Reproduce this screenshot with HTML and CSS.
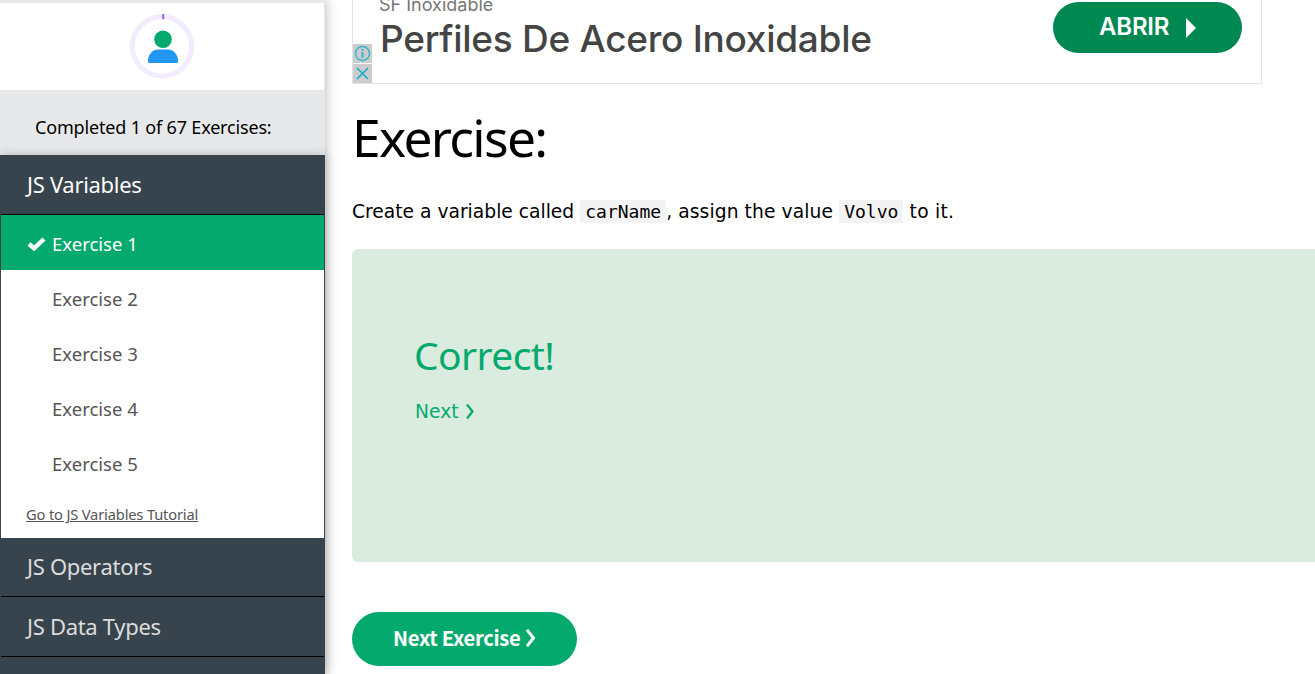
FILE: index.html
```html
<!DOCTYPE html>
<html lang="en">
<head>
<meta charset="utf-8">
<title>JS Exercises</title>
<link rel="stylesheet" href="styles.css">
</head>
<body>
<div class="page">
  <aside class="sidebar">
    <div class="profile">
      <svg class="avatar" viewBox="0 0 66 66" width="66" height="66">
        <circle cx="33" cy="32.500" r="29.700" fill="none" stroke="#f3ecff" stroke-width="5"/>
        <path d="M33.200 0h2v5.200h-2z" fill="#9763f6"/>
        <circle cx="34" cy="25.300" r="8.800" fill="#04aa6d"/>
        <path d="M19 47.500V47C19 40 24 35.500 29 35.500H39C44 35.500 49 40 49 47V47.500Q49 49 47.500 49H20.500Q19 49 19 47.500Z" fill="#2196f3"/>
      </svg>
    </div>
    <p class="progress">Completed 1 of 67 Exercises:</p>
    <nav class="menu">
      <a class="section open">JS Variables</a>
      <a class="item active"><svg class="check" viewBox="0 0 19 14" width="19" height="14"><path d="M2 7 7.100 11.300 17 2" fill="none" stroke="#fff" stroke-width="4.400"/></svg><span>Exercise 1</span></a>
      <a class="item">Exercise 2</a>
      <a class="item">Exercise 3</a>
      <a class="item">Exercise 4</a>
      <a class="item">Exercise 5</a>
      <a class="tutorial">Go to JS Variables Tutorial</a>
      <a class="section short">JS Operators</a>
      <a class="section">JS Data Types</a>
      <a class="section"></a>
    </nav>
  </aside>
  <main class="content">
    <section class="ad">
      <div class="ad-copy">
        <div class="ad-brand">SF Inoxidable</div>
        <div class="ad-title">Perfiles De Acero Inoxidable</div>
      </div>
      <a class="ad-button"><span>ABRIR</span><svg width="10" height="20" viewBox="0 0 10 20"><path d="M0 0 10 10 0 20z" fill="#fff"/></svg></a>
      <div class="ad-badges">
        <svg width="19" height="19" viewBox="0 0 19 19"><rect width="19" height="19" fill="#ccc"/><circle cx="9.500" cy="9.500" r="7" fill="none" stroke="#37b6cf" stroke-width="1.500"/><path d="M9.500 5v2M9.500 8v6" stroke="#37b6cf" stroke-width="2"/></svg>
        <svg width="19" height="19" viewBox="0 0 19 19"><rect width="19" height="19" fill="#ccc"/><path d="M4 4 15 15M15 4 4 15" stroke="#12aecb" stroke-width="1.600"/></svg>
      </div>
    </section>
    <h1 class="heading">Exercise:</h1>
    <p class="task">Create a variable called <code>carName</code><span class="loose">, assign the value </span><code>Volvo</code><span class="looser"> to it.</span></p>
    <section class="result">
      <h2 class="verdict">Correct!</h2>
      <a class="next"><span>Next</span><svg width="10" height="15" viewBox="0 0 10 15"><path d="M2 .500 7.500 7.500 2 14.500" fill="none" stroke="#04aa6d" stroke-width="2.300"/></svg></a>
    </section>
    <a class="next-exercise"><span>Next Exercise</span><svg width="12" height="18" viewBox="0 0 12 18"><path d="M2 .800 8.500 9 2 17.200" fill="none" stroke="#fff" stroke-width="3"/></svg></a>
  </main>
</div>
</body>
</html>
```
FILE: styles.css
```css
* { box-sizing: border-box; }
body { margin: 0; background: #fff; font-family: "Noto Sans", sans-serif; color: #000; }
.page { display: flex; height: 674px; overflow: hidden; }
.sidebar { width: 325px; flex: none; background: #e7e8ea; padding-top: 3px; box-shadow: 0 0 12px rgba(0,0,0,.3); }
.profile { height: 87px; margin-right: 1px; background: #fff; display: flex; justify-content: center; padding-top: 11px; }
.progress { margin: 0; height: 65px; padding: 25px 0 0 35px; font-size: 18px; letter-spacing: -.17px; line-height: 25px; white-space: nowrap; }
.menu { background: #38444d; box-shadow: 0 0 10px rgba(0,0,0,.2); padding: 0 1px; height: 600px; }
.section { display: block; height: 60px; padding-left: 26px; border-bottom: 1px solid #000; font-size: 22px; letter-spacing: -.3px; line-height: 59px; color: #ddd; }
.open { color: #fff; }
.short { height: 59px; line-height: 57px; }
.item { display: flex; align-items: center; height: 55px; padding: 2px 0 0 51px; background: #fff; color: #555; font-size: 18.500px; }
.active { background: #04aa6d; color: #fff; padding-left: 26px; gap: 6px; }
.tutorial { display: block; height: 48px; padding-left: 25px; background: #fff; color: #555; font-size: 14.700px; letter-spacing: -.17px; line-height: 49px; text-decoration: underline; }
.content { flex: none; width: 990px; padding-left: 27px; }
.ad { position: relative; width: 910px; height: 84px; border: 1px solid #e3e3e3; border-top: 0; display: flex; justify-content: space-between; padding: 2px 19px 0 26px; }
.ad-brand { font: 18px/20px Inter, sans-serif; color: #777; margin-top: -7px; }
.ad-title { font: 500 37px/48px Inter, sans-serif; letter-spacing: -.27px; color: #444; white-space: nowrap; padding-left: 1px; }
.ad-button { width: 189px; height: 51px; border-radius: 26px; background: #008853; color: #fff; font: 600 24px/48px Inter, sans-serif; letter-spacing: -.2px; display: flex; align-items: center; padding-left: 46px; gap: 17px; }
.ad-button span { padding-bottom: 1px; }
.ad-badges { position: absolute; left: 0; top: 44px; display: grid; gap: 1px; }
.ad-badges svg, .avatar { display: block; }
.heading { margin: 15px 0 0; font-size: 51.500px; letter-spacing: -1.700px; line-height: 76px; font-weight: 400; }
.task { margin: 24px 0 0; font: 18.700px/26px "DejaVu Sans", sans-serif; height: 26px; white-space: nowrap; }
.task code { font: 18.050px/23px "DejaVu Sans Mono", monospace; background: #f3f3f3; padding: 1px 5px; }
.loose { letter-spacing: .09px; }
.looser { letter-spacing: .25px; }
.result { margin-top: 24px; height: 313px; border-radius: 6px 0 0 6px; background: #d9ecdf; padding: 78px 63px; color: #04aa6d; }
.verdict { margin: 0 0 0 -1px; font-size: 39px; letter-spacing: -.600px; line-height: 56px; font-weight: 400; }
.next { display: flex; align-items: center; gap: 6px; margin-top: 16px; font: 18.700px/26px "DejaVu Sans", sans-serif; }
.next svg { margin-bottom: 1px; }
.next-exercise { display: flex; align-items: center; gap: 5px; margin-top: 50px; width: 225px; height: 54px; border-radius: 27px; background: #04aa6d; color: #fff; padding-left: 41px; font: 700 20.200px/50px "Noto Sans CJK SC", sans-serif; letter-spacing: -.3px; }
.next-exercise span { padding-bottom: 3px; }
.next-exercise svg { margin-bottom: 2px; }
```
